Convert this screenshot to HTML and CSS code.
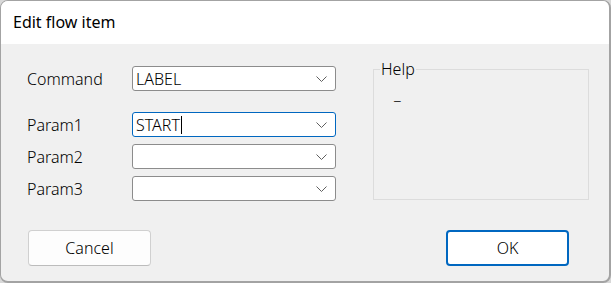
FILE: index.html
```html
<!DOCTYPE html>
<html lang="en">
<head>
  <meta charset="UTF-8">
  <title>Edit flow item</title>
  <link rel="stylesheet" href="styles.css">
</head>
<body>

  <div class="window">
    <!-- Title bar -->
    <div class="titlebar">Edit flow item</div>

    <div class="content">
      <div class="main">
        <!-- Fields -->
        <div class="form">
          <div class="row row-command">
            <label>Command</label>
            <div class="combo">
              <span class="value">LABEL</span>
              <svg class="chevron" width="11" height="7" viewBox="0 0 11 7"><path d="M0.5 0.5 L5.5 5.5 L10.5 0.5" fill="none" stroke="#5f5f5f" stroke-width="1"/></svg>
            </div>
          </div>
          <div class="row">
            <label>Param1</label>
            <div class="combo focused">
              <span class="value">START<span class="caret"></span></span>
              <svg class="chevron" width="11" height="7" viewBox="0 0 11 7"><path d="M0.5 0.5 L5.5 5.5 L10.5 0.5" fill="none" stroke="#5f5f5f" stroke-width="1"/></svg>
            </div>
          </div>
          <div class="row">
            <label>Param2</label>
            <div class="combo">
              <span class="value"></span>
              <svg class="chevron" width="11" height="7" viewBox="0 0 11 7"><path d="M0.5 0.5 L5.5 5.5 L10.5 0.5" fill="none" stroke="#5f5f5f" stroke-width="1"/></svg>
            </div>
          </div>
          <div class="row">
            <label>Param3</label>
            <div class="combo">
              <span class="value"></span>
              <svg class="chevron" width="11" height="7" viewBox="0 0 11 7"><path d="M0.5 0.5 L5.5 5.5 L10.5 0.5" fill="none" stroke="#5f5f5f" stroke-width="1"/></svg>
            </div>
          </div>
        </div>

        <!-- Help box -->
        <fieldset class="help">
          <legend>Help</legend>
          <p>_</p>
        </fieldset>
      </div>

      <!-- Buttons -->
      <div class="buttons">
        <button class="btn">Cancel</button>
        <button class="btn btn-default">OK</button>
      </div>
    </div>
  </div>

</body>
</html>
```

FILE: styles.css
```css
html, body {
  margin: 0;
  padding: 0;
  width: 611px;
  height: 283px;
  background-color: #d8d8d8;
  font-family: "Noto Sans", sans-serif;
  font-weight: 300;
  color: #000;
}

/* Window frame */
.window {
  box-sizing: border-box;
  width: 611px;
  height: 283px;
  border: 1px solid #a3a3a3;
  border-right-width: 2px;
  border-bottom-width: 2px;
  border-radius: 8px;
  overflow: hidden;
  background-color: #f0f0f0;
  display: flex;
  flex-direction: column;
}

.titlebar {
  height: 43px;
  background-color: #ffffff;
  font-size: 16px;
  font-weight: 400;
  line-height: 43px;
  padding-left: 12px;
  flex-shrink: 0;
}

.content {
  flex: 1;
  padding: 22px 0 0 26px;
}

.main {
  display: flex;
  align-items: flex-start;
}

/* Form */
.form {
  width: 310px;
}

.row {
  display: flex;
  align-items: center;
  height: 25px;
  margin-bottom: 7px;
}

.row-command {
  margin-bottom: 21px;
}

.row label {
  width: 105px;
  font-size: 16px;
  line-height: 20px;
}

.combo {
  box-sizing: border-box;
  width: 204px;
  height: 25px;
  border: 1px solid #8c8c8c;
  border-radius: 3px;
  background-color: #ffffff;
  display: flex;
  align-items: center;
  justify-content: space-between;
  padding: 0 8px 0 3px;
}

.combo.focused {
  border-color: #0067c0;
}

.combo .value {
  font-size: 16px;
  line-height: 20px;
  display: flex;
  align-items: center;
}

.caret {
  display: inline-block;
  width: 1px;
  height: 18px;
  margin-left: 1px;
  background-color: #000;
}

.chevron {
  margin-top: 1px;
}

/* Help group */
.help {
  box-sizing: border-box;
  width: 216px;
  height: 139px;
  margin: -5px 0 0 36px;
  padding: 8px 0 0 20px;
  border: 1px solid #dcdcdc;
}

.help legend {
  font-size: 16px;
  padding: 0 1px;
  margin-left: -14px;
  line-height: 16px;
}

.help p {
  margin: 0;
  font-size: 16px;
  line-height: 18px;
}

/* Buttons */
.buttons {
  display: flex;
  justify-content: space-between;
  width: 541px;
  margin-top: 22px;
  padding-left: 1px;
}

.btn {
  box-sizing: border-box;
  width: 123px;
  height: 36px;
  background-color: #fdfdfd;
  border: 1px solid #d0d0d0;
  border-bottom-color: #bcbcbc;
  border-radius: 4px;
  font-family: inherit;
  font-weight: 300;
  font-size: 16px;
  color: #000;
}

.btn-default {
  border: 2px solid #0067c0;
  background-color: #ffffff;
}
```
